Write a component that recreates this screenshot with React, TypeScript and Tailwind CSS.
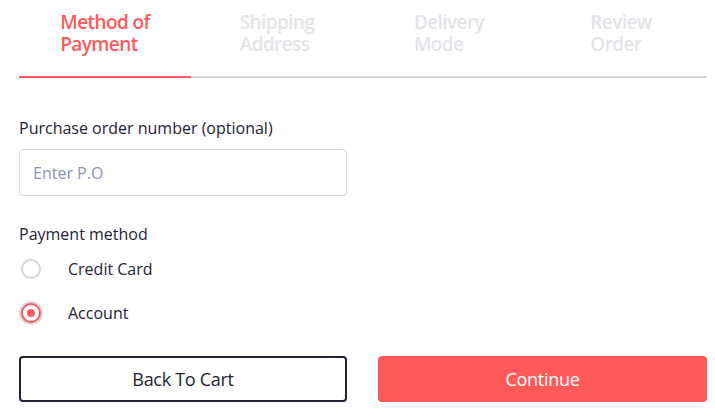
const steps = [
  ["Method of", "Payment"],
  ["Shipping", "Address"],
  ["Delivery", "Mode"],
  ["Review", "Order"],
];

export default function App() {
  return (
    <div
      className="w-[715px] h-[412px] bg-white pl-[19px] pr-[8px] pt-[11px] text-[#1f2335]"
      style={{ fontFamily: '"Open Sans", "Noto Sans", sans-serif' }}
    >
      <div className="grid grid-cols-4">
        {steps.map((s, i) => (
          <div
            key={s[0]}
            className={
              "flex justify-center pb-[21px] border-b-2 " +
              (i === 0 ? "border-[#ff5a5a]" : "border-[#d4d6db]")
            }
          >
            <div
              className={
                "text-left text-[19px] font-semibold leading-[22px] tracking-[-0.6px] " +
                (i === 0 ? "text-[#ff5a5a]" : "text-[#e3e4e8]")
              }
            >
              <div>{s[0]}</div>
              <div>{s[1]}</div>
            </div>
          </div>
        ))}
      </div>

      <div className="mt-[39px] text-[16px] leading-[22px]">Purchase order number (optional)</div>
      <div className="mt-[10px] w-[328px] h-[47px] border border-[#d7d9de] rounded flex items-center px-[13px] text-[16px] text-[#8b93b5]">
        Enter P.O
      </div>

      <div className="mt-[27px] text-[16px] leading-[22px]">Payment method</div>
      <div className="mt-[12px] flex items-center h-[24px]">
        <div className="w-6 flex justify-center">
          <div className="w-5 h-5 rounded-full border-2 border-[#d4d6db]" />
        </div>
        <span className="ml-[25px] text-[16px]">Credit Card</span>
      </div>
      <div className="mt-[20px] flex items-center h-[24px]">
        <div className="w-6 h-6 rounded-full bg-[#d9dade] flex items-center justify-center">
          <div className="w-5 h-5 rounded-full border-2 border-[#ff5a5a] bg-white flex items-center justify-center">
            <div className="w-2 h-2 rounded-full bg-[#ff5a5a]" />
          </div>
        </div>
        <span className="ml-[25px] text-[16px]">Account</span>
      </div>

      <div className="mt-[31px] flex gap-[31px]">
        <button className="w-[328px] h-[46px] border-2 border-[#1f2335] rounded text-[18px] tracking-[-0.3px]">
          Back To Cart
        </button>
        <button className="w-[329px] h-[46px] bg-[#ff5a5a] rounded text-white text-[18px] tracking-[-0.3px]">
          Continue
        </button>
      </div>
    </div>
  );
}
